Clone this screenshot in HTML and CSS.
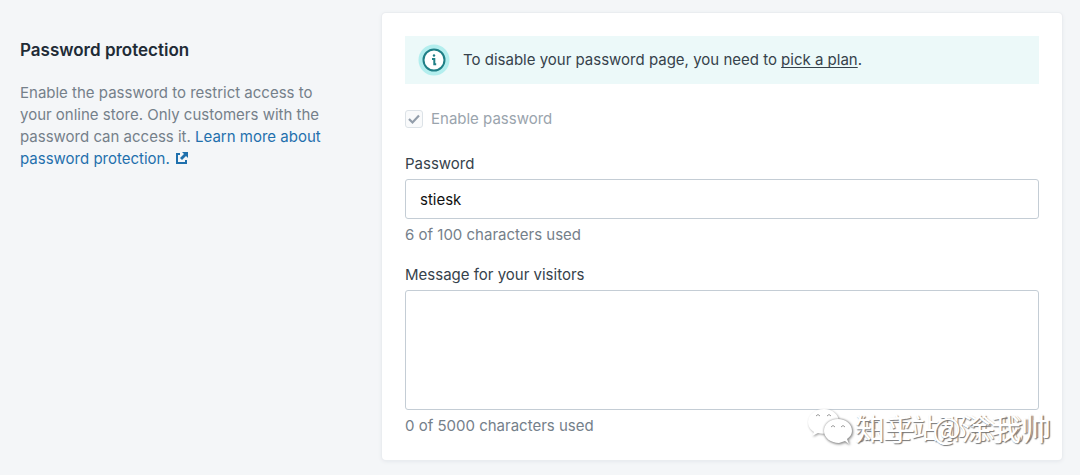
FILE: index.html
```html
<!DOCTYPE html>
<html lang="en">
<head>
<meta charset="utf-8">
<title>Password protection</title>
<link rel="stylesheet" href="styles.css">
</head>
<body>
<main class="section">
  <section class="intro">
    <h2 class="intro-title">Password protection</h2>
    <p class="intro-text">Enable the password to restrict access to your online store. Only customers with the password can access it. <a class="link" href="#">Learn more about password protection. <svg class="external" viewBox="0 0 12 12" aria-hidden="true"><path d="M4 2H1V11H10V8" fill="none" stroke="currentColor" stroke-width="2"/><path d="M6 0H12V6L10 4L6 8L4 6L8 2Z" fill="currentColor"/></svg></a></p>
  </section>
  <form class="card">
    <div class="banner">
      <svg class="info" viewBox="0 0 32 32" aria-hidden="true"><circle cx="16" cy="16" r="15.500" fill="#b3eeee"/><circle cx="16" cy="16" r="10.500" fill="#fff" stroke="#1f7f86" stroke-width="2"/><circle cx="16" cy="11.500" r="1.200" fill="#1f7f86"/><path d="M14 15H16.300V20.300H18.200" fill="none" stroke="#1f7f86" stroke-width="2"/></svg>
      <p class="banner-text">To disable your password page, you need to <a class="plan" href="#">pick a plan</a>.</p>
    </div>
    <label class="choice"><input class="check" type="checkbox" checked disabled>Enable password</label>
    <div class="field">
      <label class="label" for="password">Password</label>
      <input class="control" id="password" type="text" value="stiesk" maxlength="100">
      <p class="help">6 of 100 characters used</p>
    </div>
    <div class="field">
      <label class="label" for="message">Message for your visitors</label>
      <textarea class="control message" id="message" maxlength="5000"></textarea>
      <p class="help">0 of 5000 characters used</p>
    </div>
  </form>
</main>
<div class="watermark">
  <svg class="wechat" viewBox="0 0 46 40" aria-hidden="true"><g fill="#fff"><path d="M17 2C8 2 1 8 1 15C1 20 4 23 7 25L5 29L11 26Q17 28 22 25Q31 22 32 15C32 8 26 2 17 2Z"/></g><path class="bubble" fill="#fff" d="M31 12C23 12 17 17 17 24C17 31 24 36 32 36L38 34L42 37L40 32C43 30 45 27 45 24C45 17 39 12 31 12Z"/><g fill="none" stroke="#999" stroke-width="1"><path d="M9 9Q11 6 13 9M20 9Q22 6 24 9M24 20Q26 17 28 20M34 20Q36 17 38 20"/></g></svg>
  <span class="mark">独立站那涂我帅</span>
  <span class="mark mark-over"><span>知乎</span><span>@涂我帅</span></span>
</div>
</body>
</html>
```

FILE: styles.css
```css
* { box-sizing: border-box; }
body {
  margin: 0;
  background: #f4f6f8;
  color: #36424b;
  font: 15px/22px Inter, "Noto Sans CJK SC", sans-serif;
}
h2, p { margin: 0; }
.section {
  display: grid;
  grid-template-columns: minmax(0, 1fr) minmax(0, 2fr);
  gap: 22px;
  padding: 13px 18px 15px 20px;
}
.intro { padding: 25px 24px 0 0; }
.intro-title { color: #212b36; font-size: 17px; font-weight: 600; line-height: 24px; }
.intro-text { margin-top: 20px; color: #75808a; }
.link { color: #1f70ad; text-decoration: none; }
.external { width: 12px; height: 12px; margin-left: 2px; }
.card {
  padding: 23px;
  background: #fff;
  border-radius: 4px;
  box-shadow: 0 0 0 1px #eaedf0, 0 1px 4px #dfe3e8;
}
.banner {
  display: flex;
  align-items: center;
  gap: 13px;
  padding: 8px 13px;
  background: #ecf9f9;
}
.plan { color: inherit; text-underline-offset: 2px; text-decoration-skip-ink: none; }
.info { width: 32px; height: 32px; }
.choice { display: flex; align-items: center; gap: 8px; margin-top: 24px; color: #9aa4ad; }
.check {
  appearance: none;
  width: 18px;
  height: 18px;
  margin: 0;
  border: 1px solid #dce2e7;
  border-radius: 3px;
  background: #f9fafb url("data:image/svg+xml,%3Csvg xmlns='http://www.w3.org/2000/svg' viewBox='0 0 16 16'%3E%3Cpath d='M3 8L6.500 11.500L13 4.500' fill='none' stroke='%23929daa' stroke-width='2.200'/%3E%3C/svg%3E") center / 16px no-repeat;
}
.field { margin-top: 18px; }
.choice + .field { margin-top: 23px; }
.label { display: block; }
.control {
  display: block;
  width: 100%;
  height: 40px;
  margin: 4px 0 5px;
  padding: 0 14px;
  border: 1px solid #c4cdd5;
  border-radius: 3px;
  background: #fff;
  color: #111;
  font: inherit;
}
.message { height: 120px; resize: none; }
.help { color: #75808a; }
.watermark {
  position: absolute;
  right: 29px;
  bottom: 28px;
  display: grid;
  grid-template-columns: 46px auto;
  gap: 2px;
  align-items: center;
  color: #fff;
  font: 28px/40px "Noto Sans CJK SC", sans-serif;
  pointer-events: none;
}
.wechat { width: 46px; height: 40px; filter: drop-shadow(1px 1px 1px #999); }
.bubble { filter: drop-shadow(0 0 1px #888); }
.mark { grid-area: 1 / 2; text-shadow: 1px 1px 1px #777; }
.mark-over { display: flex; justify-content: space-between; font-size: 30px; }
```
